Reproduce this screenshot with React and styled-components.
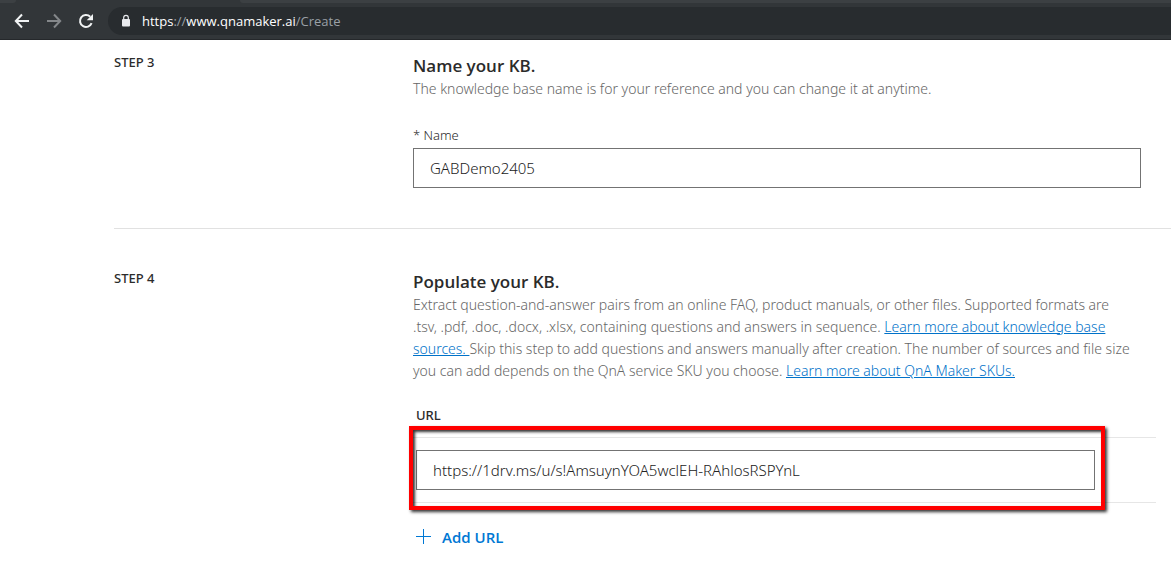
import React, { useState } from 'react'
import styled, { createGlobalStyle } from 'styled-components'

const GlobalStyle = createGlobalStyle`
* {
    box-sizing: border-box;
}

body {
    margin: 0;
    background: #fff;
    color: #2b2b2b;
    font-family: "Noto Sans", "Open Sans", sans-serif;
    font-size: 14px;
    overflow-x: hidden;
}
`;

const Browser = styled.header`
display: flex;
flex-direction: column;
height: 40px;
background: #323639;
border-bottom: 1px solid #25282b;
`;

const TabStrip = styled.div`
display: flex;
justify-content: space-between;
height: 3px;
`;

const Tab = styled.div`
width: ${({ $first }) => ($first ? '16px' : 'auto')};
flex: ${({ $first }) => ($first ? 'none' : '1')};
margin-left: ${({ $first }) => ($first ? '0' : '224px')};
background: #3c4043;
border-radius: ${({ $first }) => ($first ? '0 0 8px 0' : '0 0 0 8px')};
`;

const Toolbar = styled.div`
display: flex;
align-items: center;
padding: 4px 0 4px 14px;
`;

const NavButton = styled.button`
display: flex;
width: 16px;
height: 16px;
margin-right: 16px;
padding: 0;
border: 0;
background: none;
color: ${({ disabled }) => (disabled ? '#84878a' : '#f1f3f4')};
`;

const AddressBar = styled.div`
display: flex;
flex: 1;
align-items: center;
height: 28px;
margin-left: -2px;
padding-left: 12px;
border-radius: 14px 0 0 14px;
background: #282c2f;
color: #e8eaed;
`;

const Address = styled.span`
margin-left: 10px;
color: #9aa0a6;
font-family: "Open Sans", sans-serif;
font-size: 13px;
line-height: 20px;

b {
    color: #fff;
    font-weight: 400;
}
`;

const Page = styled.main`
padding-left: 114px;
`;

const Step = styled.section`
display: flex;
padding: ${({ $first }) => ($first ? '14px' : '41px')} 30px 40px 0;
border-bottom: ${({ $last }) => ($last ? '0' : '1px solid #e1e1e1')};
`;

const StepLabel = styled.div`
flex: 0 0 299px;
font-size: 13px;
font-weight: 500;
line-height: 16px;
`;

const StepBody = styled.div`
flex: 1;
min-width: 0;
`;

const Title = styled.h2`
margin: 0;
font-family: "Open Sans", sans-serif;
font-size: 17px;
font-weight: 600;
line-height: 24px;
`;

const Text = styled.p`
margin: 0;
padding-right: 8px;
color: #666;
font-size: 14px;
font-weight: 300;
line-height: 22px;
`;

const Link = styled.a`
color: #0072c9;
text-decoration: underline;
`;

const Label = styled.label`
display: block;
margin-top: 25px;
padding-bottom: 3px;
font-size: 13px;
font-weight: 300;
line-height: 20px;
`;

const TextBox = styled.input`
display: block;
width: 100%;
height: 40px;
padding: 0 16px;
border: 1px solid #737373;
border-radius: 0;
background: #fff;
color: #222;
font-family: inherit;
font-size: 15px;
font-weight: 300;
`;

const UrlBlock = styled.div`
margin: 25px -15px 0 0;
`;

const UrlHeader = styled.label`
display: block;
padding: 0 3px 14px;
font-size: 13px;
font-weight: 500;
line-height: 16px;
`;

const UrlRow = styled.div`
position: relative;
padding: 12px 61px 12px 3px;
border-top: 1px solid #e6e6e6;
border-bottom: 1px solid #e6e6e6;
`;

const Highlight = styled.div`
position: absolute;
top: -12px;
right: 51px;
bottom: -8px;
left: -4px;
border: 4px solid #f00;
box-shadow: 2px 2px 3px rgba(0, 0, 0, 0.8), inset 2px 2px 3px rgba(0, 0, 0, 0.8);
pointer-events: none;
`;

const AddButton = styled.button`
display: flex;
align-items: center;
gap: 10px;
margin-top: 24px;
padding: 0 3px;
border: 0;
background: none;
color: #0078d4;
font-family: "Open Sans", sans-serif;
font-size: 15px;
font-weight: 600;
line-height: 20px;
`;

const BackIcon = () => (
  <svg width="16" height="16" viewBox="0 0 16 16" fill="none" stroke="currentColor" strokeWidth="2">
    <path d="M15 8H2M8 1.5L1.8 8L8 14.5" />
  </svg>
)

const ForwardIcon = () => (
  <svg width="16" height="16" viewBox="0 0 16 16" fill="none" stroke="currentColor" strokeWidth="2">
    <path d="M1 8H14M8 1.5L14.2 8L8 14.5" />
  </svg>
)

const ReloadIcon = () => (
  <svg width="16" height="16" viewBox="0 0 16 16" fill="none">
    <path d="M13.6 10.2A6 6 0 1 1 12.2 3.7" stroke="currentColor" strokeWidth="2" />
    <path d="M15 1V7.3H8.7Z" fill="currentColor" />
  </svg>
)

const LockIcon = () => (
  <svg width="12" height="14" viewBox="0 0 12 14" fill="none">
    <rect x="2" y="5" width="8" height="7.5" rx="1" fill="currentColor" />
    <path d="M3.7 5.5V3.6a2.3 2.3 0 0 1 4.6 0V5.5" stroke="currentColor" strokeWidth="1.2" />
  </svg>
)

const PlusIcon = () => (
  <svg width="16" height="16" viewBox="0 0 16 16" fill="#0078d4">
    <path d="M0 7H15V8H0ZM7 0H8V15H7Z" />
  </svg>
)

const App = () => {
  const [name, setName] = useState('GABDemo2405')
  const [url, setUrl] = useState('https://1drv.ms/u/s!AmsuynYOA5wclEH-RAhlosRSPYnL')

  return (
    <>
      <GlobalStyle />
      <Browser>
        <TabStrip>
          <Tab $first />
          <Tab />
        </TabStrip>
        <Toolbar>
          <NavButton aria-label="Back"><BackIcon /></NavButton>
          <NavButton aria-label="Forward" disabled><ForwardIcon /></NavButton>
          <NavButton aria-label="Reload"><ReloadIcon /></NavButton>
          <AddressBar>
            <LockIcon />
            <Address><b>https</b>://<b>www.qnamaker.ai</b>/Create</Address>
          </AddressBar>
        </Toolbar>
      </Browser>
      <Page>
        <Step $first>
          <StepLabel>STEP 3</StepLabel>
          <StepBody>
            <Title>Name your KB.</Title>
            <Text>The knowledge base name is for your reference and you can change it at anytime.</Text>
            <Label htmlFor="name">* Name</Label>
            <TextBox id="name" value={name} onChange={(e) => setName(e.target.value)} />
          </StepBody>
        </Step>
        <Step $last>
          <StepLabel>STEP 4</StepLabel>
          <StepBody>
            <Title>Populate your KB.</Title>
            <Text>
              Extract question-and-answer pairs from an online FAQ, product manuals, or other files. Supported formats are
              .tsv, .pdf, .doc, .docx, .xlsx, containing questions and answers in sequence. <Link href="#sources">Learn more about knowledge base
              sources. </Link>Skip this step to add questions and answers manually after creation. The number of sources and file size
              you can add depends on the QnA service SKU you choose. <Link href="#skus">Learn more about QnA Maker SKUs.</Link>
            </Text>
            <UrlBlock>
              <UrlHeader htmlFor="url">URL</UrlHeader>
              <UrlRow>
                <TextBox id="url" value={url} onChange={(e) => setUrl(e.target.value)} />
                <Highlight />
              </UrlRow>
            </UrlBlock>
            <AddButton><PlusIcon />Add URL</AddButton>
          </StepBody>
        </Step>
      </Page>
    </>
  )
}

export default App
